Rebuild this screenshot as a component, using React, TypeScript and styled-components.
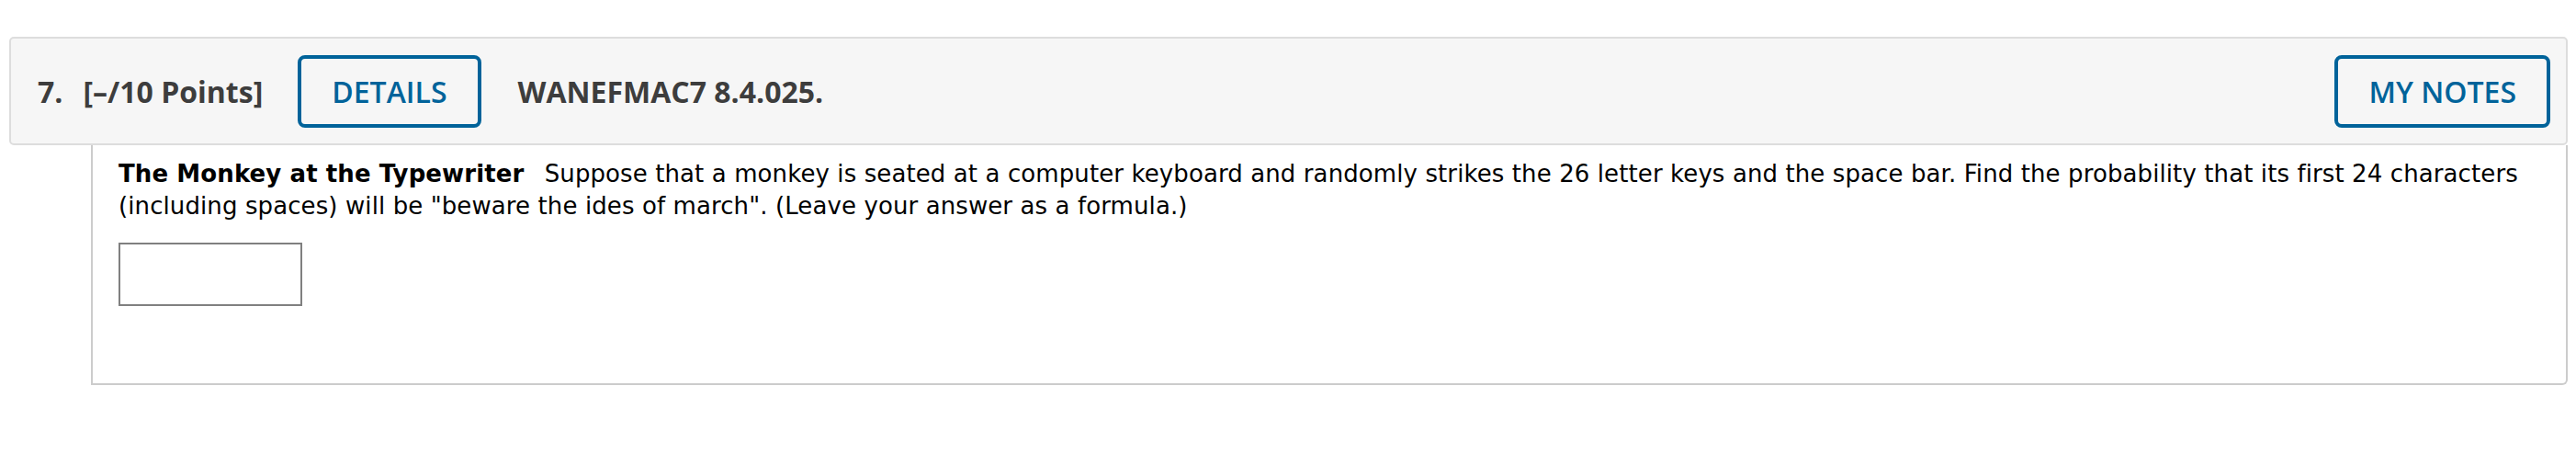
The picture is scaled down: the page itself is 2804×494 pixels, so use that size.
import React from 'react';
import styled, { createGlobalStyle } from 'styled-components';

const GlobalStyle = createGlobalStyle`
  html, body {
    margin: 0;
    padding: 0;
    background: #ffffff;
  }
`;

const Page = styled.div`
  padding: 40px 0 0 10px;
  width: 2785px;
`;

const Header = styled.div`
  display: flex;
  align-items: center;
  box-sizing: border-box;
  height: 118px;
  padding: 0 17px 0 29px;
  background: #f6f6f6;
  border: 2px solid #dddddd;
  border-radius: 5px;
  font-family: 'Open Sans', 'Liberation Sans', sans-serif;
  color: #3d3d3d;
`;

const QuestionNumber = styled.span`
  font-size: 32px;
  font-weight: 700;
  margin-right: 22px;
`;

const Points = styled.span`
  font-size: 32px;
  font-weight: 700;
  margin-right: 38px;
`;

const OutlineButton = styled.button<{ $pushRight?: boolean }>`
  box-sizing: border-box;
  height: 79px;
  padding: 0 33px;
  margin-left: ${p => (p.$pushRight ? 'auto' : '0')};
  background: transparent;
  border: 4px solid #00639a;
  border-radius: 8px;
  color: #00639a;
  font-family: 'Open Sans', 'Liberation Sans', sans-serif;
  font-size: 32px;
  font-weight: 600;
  cursor: pointer;
`;

const Code = styled.span`
  font-size: 32px;
  font-weight: 700;
  margin-left: 40px;
`;

const Body = styled.div`
  margin-left: 89px;
  padding: 14px 40px 84px 28px;
  background: #ffffff;
  border: 2px solid #cccccc;
  border-top: none;
  border-radius: 0 0 6px 0;
  font-family: 'DejaVu Sans', Verdana, sans-serif;
  font-size: 26px;
  line-height: 35px;
  letter-spacing: 0.1px;
  color: #000000;
`;

const Prompt = styled.p`
  margin: 0;
`;

const Title = styled.b`
  margin-right: 14px;
`;

const AnswerInput = styled.input`
  display: block;
  box-sizing: border-box;
  width: 200px;
  height: 69px;
  margin-top: 22px;
  border: 2px solid #808080;
  background: #ffffff;
  font-family: inherit;
  font-size: 26px;
  outline: none;
`;

export default function App() {
  return (
    <>
      <GlobalStyle />
      <Page>
        <Header>
          <QuestionNumber>7.</QuestionNumber>
          <Points>[–/10 Points]</Points>
          <OutlineButton>DETAILS</OutlineButton>
          <Code>WANEFMAC7 8.4.025.</Code>
          <OutlineButton $pushRight>MY NOTES</OutlineButton>
        </Header>
        <Body>
          <Prompt>
            <Title>The Monkey at the Typewriter</Title> Suppose that a monkey is
            seated at a computer keyboard and randomly strikes the 26 letter keys
            and the space bar. Find the probability that its first 24 characters
            (including spaces) will be "beware the ides of march". (Leave your
            answer as a formula.)
          </Prompt>
          <AnswerInput type="text" aria-label="answer" />
        </Body>
      </Page>
    </>
  );
}
